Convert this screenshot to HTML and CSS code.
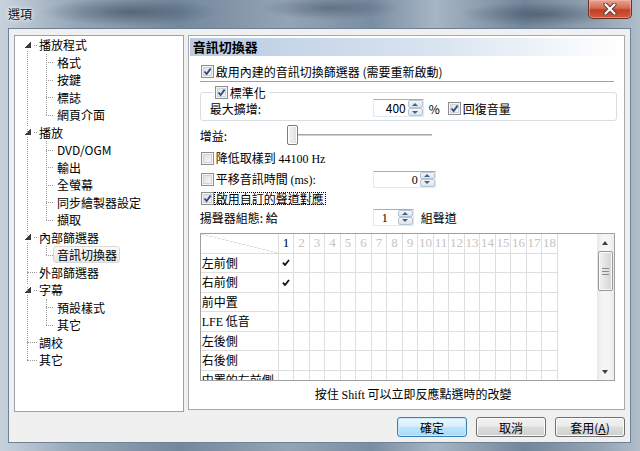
FILE: index.html
```html
<!DOCTYPE html>
<html lang="zh-Hant">
<head>
  <meta charset="UTF-8">
  <title>選項</title>
  <link rel="stylesheet" href="styles.css">
</head>
<body>
  <div class="window">
    <div class="titlebar">
      <span class="title">選項</span>
      <div class="close-btn">
        <svg width="14" height="12" viewBox="0 0 14 12">
          <path d="M2.5 1.5 L11.5 10.5 M11.5 1.5 L2.5 10.5" stroke="#5a3a36" stroke-width="4" stroke-linecap="round"/>
          <path d="M2.5 1.5 L11.5 10.5 M11.5 1.5 L2.5 10.5" stroke="#fff" stroke-width="2.2" stroke-linecap="round"/>
        </svg>
      </div>
    </div>

    <div class="client">
      <div class="main">
        <!-- page tree -->
        <div class="tree">
          <ul class="root">
            <li class="open"><span class="node">播放程式</span>
              <ul class="children">
                <li><span class="node">格式</span></li>
                <li><span class="node">按鍵</span></li>
                <li><span class="node">標誌</span></li>
                <li><span class="node">網頁介面</span></li>
              </ul>
            </li>
            <li class="open"><span class="node">播放</span>
              <ul class="children">
                <li><span class="node">DVD/OGM</span></li>
                <li><span class="node">輸出</span></li>
                <li><span class="node">全螢幕</span></li>
                <li><span class="node">同步繪製器設定</span></li>
                <li><span class="node">擷取</span></li>
              </ul>
            </li>
            <li class="open"><span class="node">內部篩選器</span>
              <ul class="children">
                <li><span class="node"><span class="sel">音訊切換器</span></span></li>
              </ul>
            </li>
            <li><span class="node">外部篩選器</span></li>
            <li class="open"><span class="node">字幕</span>
              <ul class="children">
                <li><span class="node">預設樣式</span></li>
                <li><span class="node">其它</span></li>
              </ul>
            </li>
            <li><span class="node">調校</span></li>
            <li><span class="node">其它</span></li>
          </ul>
        </div>

        <!-- settings page -->
        <div class="page">
          <div class="page-title">音訊切換器</div>
          <div class="page-body">
            <div class="row row-enable">
              <span class="cb on"><svg viewBox="0 0 9 9"><path d="M1.5 4.5 L3.6 7 L7.6 1.6" /></svg></span>
              <span>啟用內建的音訊切換篩選器 (需要重新啟動)</span>
            </div>
            <div class="sep"></div>

            <div class="group">
              <div class="group-title">
                <span class="cb on"><svg viewBox="0 0 9 9"><path d="M1.5 4.5 L3.6 7 L7.6 1.6" /></svg></span>
                <span>標準化</span>
              </div>
              <div class="row row-boost">
                <span class="lbl-boost">最大擴增:</span>
                <span class="spin spin-boost">
                  <span class="spin-val">400</span>
                  <span class="spin-btns"><span class="spin-up"></span><span class="spin-down"></span></span>
                </span>
                <span class="pct">%</span>
                <span class="cb on"><svg viewBox="0 0 9 9"><path d="M1.5 4.5 L3.6 7 L7.6 1.6" /></svg></span>
                <span>回復音量</span>
              </div>
            </div>

            <div class="row row-gain">
              <span class="lbl-gain">增益:</span>
              <span class="slider"><span class="thumb"></span><span class="track"></span></span>
            </div>

            <div class="row row-resample">
              <span class="cb"></span>
              <span>降低取樣到 <span class="serif">44100 Hz</span></span>
            </div>

            <div class="row row-shift">
              <span class="cb"></span>
              <span class="lbl-shift">平移音訊時間 <span class="serif">(ms):</span></span>
              <span class="spin spin-shift">
                <span class="spin-val serif">0</span>
                <span class="spin-btns"><span class="spin-up"></span><span class="spin-down"></span></span>
              </span>
            </div>

            <div class="row row-custom">
              <span class="cb on"><svg viewBox="0 0 9 9"><path d="M1.5 4.5 L3.6 7 L7.6 1.6" /></svg></span>
              <span class="focus">啟用自訂的聲道對應</span>
            </div>

            <div class="row row-speakers">
              <span class="lbl-main">揚聲器組態: 給</span>
              <span class="spin spin-groups">
                <span class="spin-val serif">1</span>
                <span class="spin-btns"><span class="spin-up"></span><span class="spin-down"></span></span>
              </span>
              <span class="unit">組聲道</span>
            </div>

            <div class="matrix">
              <div class="matrix-view">
                <div class="matrix-grid" id="matrixGrid"></div>
              </div>
              <div class="vscroll">
                <span class="vs-up"></span>
                <span class="vs-thumb"><span class="grip"></span></span>
                <span class="vs-track"></span>
                <span class="vs-down"></span>
              </div>
            </div>

            <div class="hint">按住 <span class="serif">Shift</span> 可以立即反應點選時的改變</div>
          </div>
        </div>
      </div>

      <div class="buttons">
        <button class="btn default">確定</button>
        <button class="btn">取消</button>
        <button class="btn">套用(<u>A</u>)</button>
      </div>
    </div>
  </div>

  <script>
    // Build the speaker / channel matrix
    const channels = ["左前側", "右前側", "前中置", '<span class="serif">LFE</span> 低音', "左後側", "右後側", "中置的左前側"];
    const tick = '<svg width="8" height="7" viewBox="0 0 8 7"><path d="M1 3.6 L3 6 L7 1" fill="none" stroke="#111" stroke-width="1.8"/></svg>';
    const grid = document.getElementById("matrixGrid");

    let html = '<div class="cell corner"></div>';
    for (let c = 1; c <= 18; c++) {
      html += '<div class="cell head' + (c === 1 ? ' active' : '') + '">' + c + '</div>';
    }
    channels.forEach((name, r) => {
      html += '<div class="cell label">' + name + '</div>';
      for (let c = 1; c <= 18; c++) {
        html += '<div class="cell">' + (c === 1 && r < 2 ? tick : '') + '</div>';
      }
    });
    grid.innerHTML = html;
  </script>
</body>
</html>
```

FILE: styles.css
```css
/* Reset */
* {
    margin: 0;
    padding: 0;
    box-sizing: border-box;
}

body {
    width: 640px;
    height: 451px;
    overflow: hidden;
    font-family: "Noto Sans CJK TC", "Noto Sans", sans-serif;
    font-size: 12px;
    color: #000;
}

.serif {
    font-family: "Liberation Serif", "Noto Sans CJK TC", serif;
}

/* Aero window frame */
.window {
    width: 640px;
    height: 451px;
    display: flex;
    flex-direction: column;
    padding: 0 9px 8px 8px;
    background:
        radial-gradient(ellipse 90px 14px at 130px 12px, rgba(40, 55, 72, 0.5), transparent),
        radial-gradient(ellipse 70px 12px at 330px 8px, rgba(40, 55, 72, 0.4), transparent),
        radial-gradient(ellipse 80px 12px at 540px 14px, rgba(40, 55, 72, 0.45), transparent),
        linear-gradient(to right, #c8d2dc 0%, #95a6b7 12%, #74889c 28%, #93a4b5 45%, #7a8ea2 58%, #a6b5c3 68%, #72869a 82%, #95a5b5 94%, #b0bdca 100%);
}

.titlebar {
    height: 28px;
    display: flex;
    align-items: flex-start;
}

.title {
    margin-top: 7px;
    line-height: 14px;
    color: #111;
    text-shadow: 0 0 6px #fff, 0 0 3px rgba(255, 255, 255, 0.9);
}

.close-btn {
    margin-left: auto;
    margin-right: -1px;
    width: 44px;
    height: 19px;
    border: 1px solid #6b2f26;
    border-top: none;
    border-radius: 0 0 5px 5px;
    background: linear-gradient(#e7a595, #d66a52 45%, #c13f26 55%, #d35a3e);
    box-shadow: inset 0 0 0 1px rgba(255, 200, 190, 0.45);
    display: flex;
    align-items: center;
    justify-content: center;
}

/* Dialog client area */
.client {
    flex: 1;
    display: flex;
    flex-direction: column;
    padding: 6px 5px 0 5px;
    background: #f0f0f0;
    border: 1px solid #6f8194;
}

.main {
    display: flex;
    align-items: flex-start;
    gap: 4px;
    height: 377px;
}

/* Tree view */
.tree {
    width: 170px;
    height: 377px;
    border: 1px solid #9ea2a8;
    background: #fff;
}

.tree ul {
    list-style: none;
    position: relative;
}

.tree li {
    position: relative;
}

.node {
    display: block;
    position: relative;
    height: 17.5px;
    line-height: 17.5px;
    padding-left: 24px;
    white-space: nowrap;
}

.children .node {
    padding-left: 42px;
}

.root::before {
    content: "";
    position: absolute;
    left: 12px;
    top: 8.75px;
    bottom: 8.75px;
    border-left: 1px dotted #9a9a9a;
}

.root > li > .node::before {
    content: "";
    position: absolute;
    left: 12px;
    top: 8.5px;
    width: 10px;
    border-top: 1px dotted #9a9a9a;
}

/* expanded arrow */
.root > li.open > .node::after {
    content: "";
    position: absolute;
    left: 10px;
    top: 5.5px;
    width: 6px;
    height: 6px;
    background: linear-gradient(to bottom right, transparent 50%, #3a3a3a 50%);
    box-shadow: 0 0 0 2px #fff;
}

.children::before {
    content: "";
    position: absolute;
    left: 31px;
    top: 0;
    bottom: 8.75px;
    border-left: 1px dotted #9a9a9a;
}

.children .node::before {
    content: "";
    position: absolute;
    left: 31px;
    top: 8.5px;
    width: 7px;
    border-top: 1px dotted #9a9a9a;
}

.sel {
    display: inline-block;
    vertical-align: top;
    height: 17px;
    line-height: 15px;
    margin-left: -4px;
    padding: 0 2px 0 3px;
    border: 1px solid #d9d9d9;
    border-radius: 3px;
    background: linear-gradient(#fafafa, #e6e6e6);
}

/* Settings page */
.page {
    width: 438px;
    height: 375px;
    border: 1px solid #a9a9a9;
    background: #fff;
}

.page-title {
    height: 18px;
    margin: 2px 2px 0 1px;
    padding-left: 3px;
    line-height: 18px;
    font-size: 13px;
    font-weight: bold;
    background: linear-gradient(to right, #b9cbe2, #d8e3f0 55%, #fff);
}

.page-body {
    padding-left: 11px;
    display: flex;
    flex-direction: column;
}

.row {
    display: flex;
    align-items: center;
    white-space: nowrap;
}

/* Win7 style checkbox */
.cb {
    flex: 0 0 13px;
    width: 13px;
    height: 13px;
    margin: 0 2px 0 1px;
    border: 1px solid #8e8f8f;
    background: linear-gradient(135deg, #dcdcdc, #fbfbfb);
    box-shadow: inset 0 0 0 1px #f4f4f4, inset 0 0 0 2px #d0d4d9;
    display: flex;
    align-items: center;
    justify-content: center;
}

.cb svg {
    width: 9px;
    height: 9px;
}

.cb svg path {
    fill: none;
    stroke: #2f4a85;
    stroke-width: 1.8;
}

.row-enable {
    height: 18px;
    margin-top: 6px;
}

.sep {
    width: 414px;
    height: 2px;
    margin-top: 1px;
    border-top: 1px solid #a0a0a0;
    border-bottom: 1px solid #fff;
}

.group {
    width: 417px;
    height: 29px;
    margin-top: 9px;
    padding-left: 9px;
    border: 1px solid #d5dfe5;
    border-radius: 3px;
}

.group-title {
    display: flex;
    align-items: center;
    width: max-content;
    height: 16px;
    margin: -9px 0 0 4px;
    padding: 0 3px 0 0;
    background: #fff;
}

.row-boost {
    height: 18px;
    margin-top: -1px;
}

.lbl-boost {
    width: 163px;
}

.lbl-main {
    width: 173px;
}

.lbl-gain {
    width: 87px;
}

.lbl-shift {
    width: 157px;
}

/* Spin (up-down) box */
.spin {
    display: flex;
    height: 18px;
    background: #fff;
    border: 1px solid #e3e9ef;
    border-top-color: #abadb3;
}

.spin-val {
    flex: 1;
    text-align: right;
    padding-right: 2px;
    line-height: 16px;
}

.spin-btns {
    width: 15px;
    display: flex;
    flex-direction: column;
}

.spin-up,
.spin-down {
    flex: 1;
    display: flex;
    align-items: center;
    justify-content: center;
    border: 1px solid #b7c4d4;
    border-radius: 2px;
    background: linear-gradient(#f4f7fb, #dae3ee);
}

.spin-up::after,
.spin-down::after {
    content: "";
    border-left: 3px solid transparent;
    border-right: 3px solid transparent;
}

.spin-up::after {
    border-bottom: 3px solid #4a5f86;
}

.spin-down::after {
    border-top: 3px solid #4a5f86;
}

.spin-boost {
    width: 51px;
}

.spin-shift {
    width: 63px;
    height: 17px;
}

.spin-groups {
    width: 41px;
    height: 17px;
}

.spin-groups .spin-val {
    text-align: center;
}

.pct {
    width: 23px;
    padding-left: 5px;
}

.row-gain {
    height: 20px;
    margin-top: 4px;
}

.slider {
    display: flex;
    align-items: center;
    height: 20px;
}

.thumb {
    width: 11px;
    height: 20px;
    border: 1px solid #7c7c7c;
    border-radius: 2px;
    background: linear-gradient(to right, #f6f6f6, #dedede);
    box-shadow: inset 0 0 0 1px #fff;
}

.track {
    width: 134px;
    height: 3px;
    margin-top: 1px;
    background: #d0d0d0;
    border-top: 1px solid #a8a8a8;
    border-bottom: 1px solid #fff;
}

.row-resample {
    height: 18px;
    margin-top: 4px;
}

.row-shift {
    height: 18px;
    margin-top: 3px;
}

.row-custom {
    height: 18px;
    margin-top: 1px;
}

.focus {
    margin-left: -2px;
    padding: 0 1px;
    line-height: 11px;
    border: 1px dotted #000;
}

.row-speakers {
    height: 18px;
    margin-top: 1px;
}

.unit {
    margin-left: 7px;
}

/* Channel matrix */
.matrix {
    display: flex;
    width: 415px;
    height: 148px;
    margin-top: 7px;
    border: 1px solid #a0a0a0;
}

.matrix-view {
    flex: 1;
    overflow: hidden;
}

.matrix-grid {
    display: grid;
    grid-template-columns: 78px repeat(18, 15.5px);
    grid-auto-rows: 19.5px;
}

.cell {
    border-right: 1px solid #dedede;
    border-bottom: 1px solid #dedede;
    display: flex;
    align-items: center;
    justify-content: center;
    overflow: hidden;
}

.cell.corner {
    background: linear-gradient(to top right, transparent calc(50% - 0.6px), #d4d4d4 50%, transparent calc(50% + 0.6px));
}

.cell.head {
    font-family: "Liberation Serif", serif;
    font-size: 13px;
    color: #c4c4c4;
}

.cell.head.active {
    color: #000;
}

.cell.label {
    display: block;
    padding-left: 1px;
    line-height: 18.5px;
    white-space: nowrap;
}

/* Vertical scroll bar */
.vscroll {
    width: 17px;
    display: flex;
    flex-direction: column;
    background: linear-gradient(to right, #e8e8e8, #f5f5f5 30%, #f5f5f5 70%, #ececec);
}

.vs-up,
.vs-down {
    height: 17px;
    display: flex;
    align-items: center;
    justify-content: center;
}

.vs-up::after,
.vs-down::after {
    content: "";
    border-left: 3.5px solid transparent;
    border-right: 3.5px solid transparent;
}

.vs-up::after {
    border-bottom: 4px solid #404040;
}

.vs-down::after {
    border-top: 4px solid #404040;
}

.vs-thumb {
    height: 40px;
    margin: 0 1px;
    border: 1px solid #979797;
    border-radius: 2px;
    background: linear-gradient(to right, #f2f2f2, #e2e2e2 50%, #d4d4d4);
    box-shadow: inset 0 0 0 1px #fafafa;
    display: flex;
    align-items: center;
    justify-content: center;
}

.grip {
    width: 7px;
    height: 7px;
    background: repeating-linear-gradient(#8a8a8a 0 1px, transparent 1px 3px);
}

.vs-track {
    flex: 1;
}

.hint {
    height: 16px;
    margin-top: 5px;
    padding-left: 12px;
    width: 415px;
    text-align: center;
    line-height: 16px;
}

/* Dialog buttons */
.buttons {
    display: flex;
    justify-content: flex-end;
    gap: 9px;
    margin-top: 5px;
}

.btn {
    width: 70px;
    height: 20px;
    font-family: inherit;
    font-size: 12px;
    color: #000;
    border: 1px solid #707070;
    border-radius: 3px;
    background: linear-gradient(#f2f2f2 0%, #ebebeb 45%, #dddddd 50%, #cfcfcf 100%);
    box-shadow: inset 0 0 0 1px #fcfcfc;
}

.btn.default {
    border-color: #3c7fb1;
    background: linear-gradient(#eaf6fd 0%, #d9f0fc 45%, #bee6fd 50%, #a7d9f5 100%);
    box-shadow: inset 0 0 0 1px #c6e9fb;
}
```
